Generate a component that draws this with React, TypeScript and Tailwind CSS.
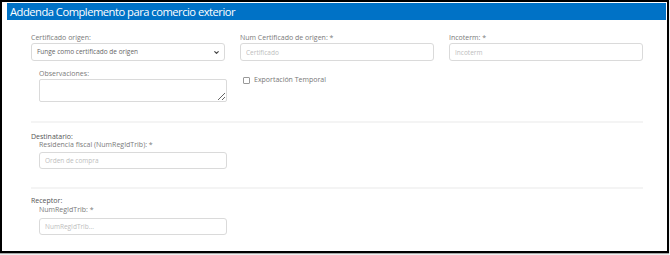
import { ChevronDown } from 'lucide-react';

const label = "block text-[7px] leading-[8px] text-[#7a7a7a]";
const field =
  "block w-full h-[17px] rounded-[3px] border border-[#dadada] bg-white px-[5px] text-[6.5px] text-[#666] placeholder:text-[#bdbdbd] outline-none";

export default function App() {
  return (
    <div className="w-[670px] h-[255px] bg-white font-['Open_Sans',sans-serif]">
      <div className="w-[669px] h-[253px] border-2 border-black shadow-[0_1px_1px_rgba(0,0,0,0.35)]">
        {/* header bar */}
        <div className="ml-[5px] mr-[1px] mt-[1px] h-[17px] bg-[#0072c6] pl-[3px] text-[11.2px] leading-[17px] tracking-[-0.5px] text-white">
          Addenda Complemento para comercio exterior
        </div>

        <div className="ml-[29px] w-[612px]">
          <div className="grid grid-cols-3 gap-x-[15px] mt-[14px]">
            <div>
              <span className={label}>Certificado origen:</span>
              <div className="mt-[1px] flex h-[18px] items-center justify-between rounded-[3px] border border-[#dadada] pl-[5px] pr-[4px] text-[6.5px] text-[#666]">
                <span>Funge como certificado de origen</span>
                <ChevronDown className="w-[7px] h-[7px] text-[#444]" strokeWidth={4} />
              </div>
            </div>
            <div>
              <span className={label}>Num Certificado de origen: *</span>
              <input className={field + " mt-[1px] h-[18px]"} placeholder="Certificado" />
            </div>
            <div>
              <span className={label}>Incoterm: *</span>
              <input className={field + " mt-[1px] h-[18px]"} placeholder="Incoterm" />
            </div>

            <div className="pl-[8px]">
              <span className={label + " mt-[9px]"}>Observaciones:</span>
              <textarea className="mt-[1px] block h-[23px] w-[188px] rounded-[2px] border border-[#dadada] outline-none" />
            </div>
            <div>
              <label className="mt-[14px] ml-[3px] flex h-[10px] items-center gap-[4px] text-[7px] text-[#777]">
                <span className="block w-[7px] h-[7px] rounded-[1px] border border-[#999] bg-white" />
                Exportación Temporal
              </label>
            </div>
            <div />
          </div>

          <div className="mt-[19px] h-[2px] bg-[#f4f4f4]" />

          <span className="mt-[10px] block text-[7px] leading-[8px] text-[#555]">Destinatario:</span>
          <div className="ml-[8px] w-[188px]">
            <span className={label}>Residencia fiscal (NumRegIdTrib): *</span>
            <input className={field + " mt-[3px]"} placeholder="Orden de compra" />
          </div>

          <div className="mt-[18px] h-[2px] bg-[#f4f4f4]" />

          <span className="mt-[8px] block text-[7px] leading-[8px] text-[#555]">Receptor:</span>
          <div className="ml-[8px] w-[188px]">
            <span className={label + " mt-[1px]"}>NumRegIdTrib: *</span>
            <input className={field + " mt-[4px]"} placeholder="NumRegIdTrib..." />
          </div>
        </div>
      </div>
    </div>
  );
}
